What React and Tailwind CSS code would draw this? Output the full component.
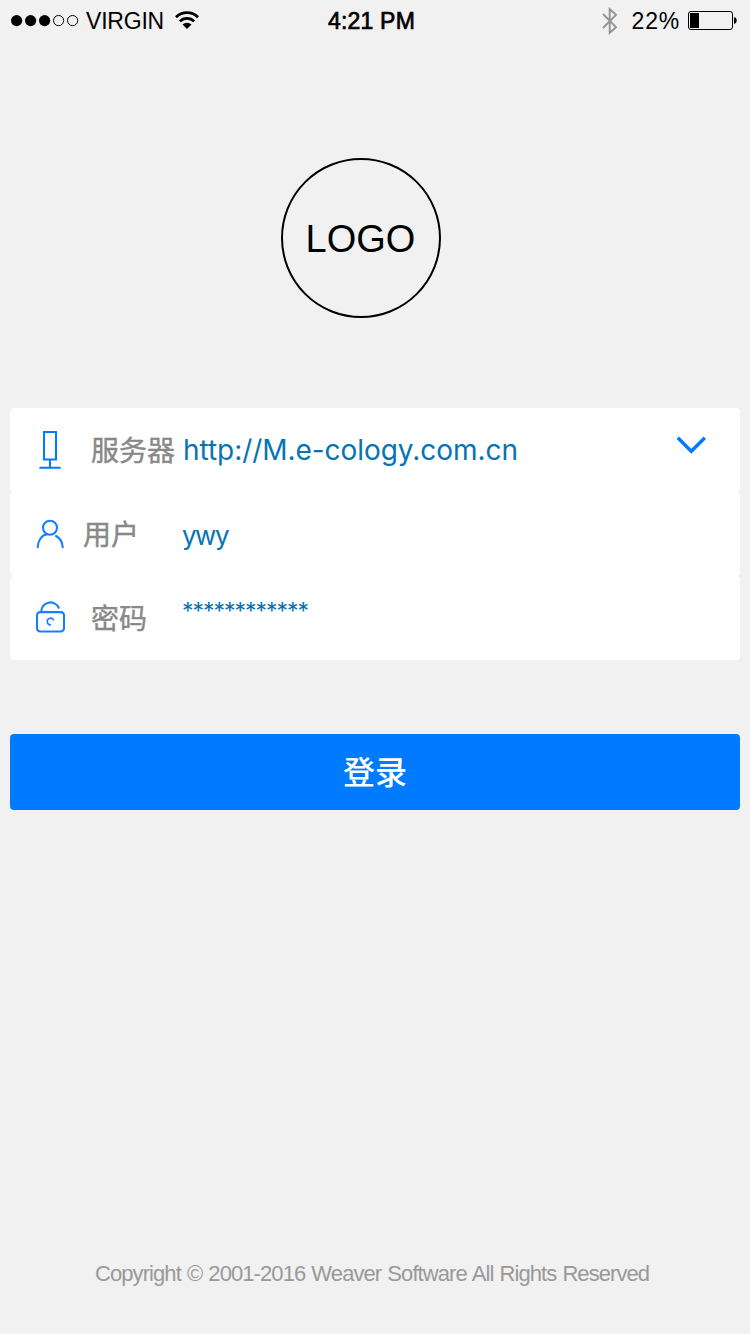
import clsx from "clsx";

function SignalDots() {
  return (
    <svg width="68" height="12" viewBox="0 0 68 12" className="mt-[15px] shrink-0">
      <circle cx="5.6" cy="5.6" r="5.6" />
      <circle cx="19.6" cy="5.6" r="5.6" />
      <circle cx="33.6" cy="5.6" r="5.6" />
      <circle cx="47.6" cy="5.6" r="5.1" fill="none" stroke="black" strokeWidth="1" />
      <circle cx="61.6" cy="5.6" r="5.1" fill="none" stroke="black" strokeWidth="1" />
    </svg>
  );
}

function WifiIcon() {
  return (
    <svg width="24" height="18" viewBox="0 0 24 18" className="mt-[11px] shrink-0" fill="none" stroke="black">
      <path d="M1 6.2a15.6 15.6 0 0 1 22 0" strokeWidth="2.9" />
      <path d="M4.9 10.4a10 10 0 0 1 14.2 0" strokeWidth="2.7" />
      <path d="M12 17.9l-4.5-4.4a6.4 6.4 0 0 1 9 0z" fill="black" stroke="none" />
    </svg>
  );
}

function BluetoothIcon() {
  return (
    <svg width="16" height="28" viewBox="0 0 16 28" className="mt-[7px] shrink-0" fill="none" stroke="#929292" strokeWidth="1.9">
      <path d="M1 7l13 13.2-6.3 5.6V2l6.3 5.8L1 21" />
    </svg>
  );
}

function BatteryIcon() {
  return (
    <svg width="50" height="20" viewBox="0 0 50 20" className="mt-[11px] shrink-0">
      <rect x="0.5" y="0.5" width="44" height="18" rx="2.5" fill="none" stroke="black" />
      <rect x="2" y="2" width="9" height="15" />
      <path d="M46 6.3c1.6 0 2.7 1.2 2.7 3.2s-1.1 3.2-2.7 3.2z" />
    </svg>
  );
}

function ServerIcon() {
  return (
    <svg width="32" height="40" viewBox="0 0 32 40" fill="none" stroke="#007aff" strokeWidth="2">
      <path d="M10 2h12v27.5H10zM16 29.5V37.8" />
      <path d="M6.2 37.8h19.6" strokeLinecap="round" />
    </svg>
  );
}

function UserIcon() {
  return (
    <svg width="32" height="40" viewBox="0 0 32 40" fill="none" stroke="#1480ff" strokeWidth="2.1" strokeLinecap="round">
      <circle cx="16" cy="13.8" r="7" />
      <path d="M3.7 33.2c.2-6.4 3.6-11.9 9.4-12.9M22 22c4.2 2.2 6.4 6.4 6.7 11.2" />
    </svg>
  );
}

function LockIcon() {
  return (
    <svg width="32" height="40" viewBox="0 0 32 40" fill="none" stroke="#1480ff" strokeWidth="2.1">
      <rect x="3" y="14.1" width="27" height="19.4" rx="3.2" />
      <path d="M7.3 13.8a9.1 9.1 0 0 1 17.4-4" strokeLinecap="round" />
      <path d="M16.9 26.8a3.3 3.3 0 1 1 2.8-4.3" strokeWidth="1.6" />
    </svg>
  );
}

const fields = [
  {
    label: "服务器",
    value: "http://M.e-cology.com.cn",
    icon: ServerIcon,
    labelClass: "ml-[25px] w-[92px]",
    valueClass: "text-[28px] leading-[84px] tracking-[-0.05px]",
    dropdown: true
  },
  {
    label: "用户",
    value: "ywy",
    icon: UserIcon,
    labelClass: "ml-[17px] w-[99px]",
    valueClass: "pt-[2px] text-[26px] leading-[84px] tracking-[-1.5px]"
  },
  {
    label: "密码",
    value: "************",
    icon: LockIcon,
    labelClass: "ml-[25px] w-[91px]",
    valueClass: "text-[23px] leading-[70px] tracking-[-1.03px]"
  }
];

function Field({ field }) {
  const Icon = field.icon;
  return (
    <div className="flex h-[84px] rounded-[4px] bg-white pl-6">
      <div className="mt-[22px] h-10 w-8 shrink-0">
        <Icon />
      </div>
      <div
        className={clsx(
          "shrink-0 font-['Noto_Sans_CJK_SC',sans-serif] text-[28px] leading-[82px] whitespace-nowrap text-[#888888] [-webkit-text-stroke:0.4px_#888888]",
          field.labelClass
        )}
      >
        {field.label}
      </div>
      <div className={clsx("grow font-['Inter',sans-serif] whitespace-nowrap text-[#0674b3]", field.valueClass)}>{field.value}</div>
      {field.dropdown && (
        <svg width="30" height="20" viewBox="0 0 30 20" className="mt-7 mr-[34px]" fill="none" stroke="#007aff" strokeWidth="3.4">
          <path d="M1.8 1.8L15.3 15.3 28.8 1.8" />
        </svg>
      )}
    </div>
  );
}

function StatusBar() {
  return (
    <div className="grid h-10 grid-cols-[1fr_100px_1fr] pr-[12px] pl-[11px] text-[23px] leading-[42px] whitespace-nowrap text-black">
      <div className="flex">
        <SignalDots />
        <span className="ml-[7px] w-[79px] tracking-[-0.2px]">VIRGIN</span>
        <span className="ml-[10px] flex">
          <WifiIcon />
        </span>
      </div>
      <div className="-ml-[6px] text-center tracking-[0.2px] [-webkit-text-stroke:0.7px_black]">4:21 PM</div>
      <div className="flex justify-end">
        <BluetoothIcon />
        <span className="mr-2 ml-[14px] tracking-[0.8px]">22%</span>
        <BatteryIcon />
      </div>
    </div>
  );
}

export default function App() {
  return (
    <div className="flex h-[1334px] w-[750px] flex-col overflow-hidden bg-[#f1f1f1] font-['Liberation_Sans',Arial,sans-serif]">
      <StatusBar />
      <div className="mt-[118px] ml-[281px] flex size-40 items-center justify-center rounded-full border-2 border-black pt-[2px] pr-[1px] text-[38px] leading-none text-black">
        LOGO
      </div>
      <form className="mx-[10px] mt-[90px]" onSubmit={(event) => event.preventDefault()}>
        {fields.map((field) => (
          <Field key={field.label} field={field} />
        ))}
        <button className="mt-[74px] flex h-[76px] w-full justify-center rounded-[4px] bg-[#007aff] font-['Noto_Sans_CJK_SC',sans-serif] text-[32px] leading-[72px] font-medium text-white">
          登录
        </button>
      </form>
      <p className="mt-auto mb-[44px] ml-[95px] text-[22px] leading-8 tracking-[-0.92px] whitespace-nowrap text-[#999999] [word-spacing:0.9px]">
        Copyright © 2001-2016 Weaver Software All Rights Reserved
      </p>
    </div>
  );
}
